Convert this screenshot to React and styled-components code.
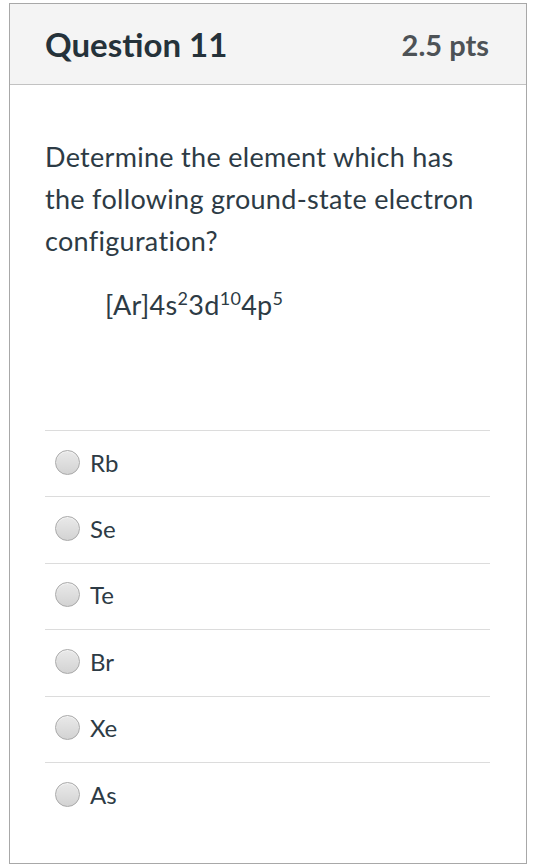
import styled, { createGlobalStyle } from "styled-components";

const GlobalStyle = createGlobalStyle`
  body {
    margin: 0;
    background: #ffffff;
    font-family: Lato, "Liberation Sans", sans-serif;
  }
`;

const Card = styled.div`
  width: 518px;
  margin: 3px 0 0 9px;
  border: 1.5px solid #a8a8a8;
  box-sizing: border-box;
  background: #ffffff;
`;

const Header = styled.div`
  height: 81px;
  background: #f4f4f4;
  border-bottom: 1px solid #c2c2c2;
  box-sizing: border-box;
  display: flex;
  align-items: center;
  justify-content: space-between;
  padding: 0 37px 0 35px;
`;

const Title = styled.div`
  font-weight: 700;
  font-size: 33px;
  color: #25323a;
`;

const Points = styled.div`
  font-weight: 700;
  font-size: 29px;
  color: #4d5256;
`;

const Body = styled.div`
  padding: 51px 35px 35px 35px;
  color: #2d3b45;
`;

const Text = styled.p`
  margin: 0;
  font-size: 27px;
  letter-spacing: 0.3px;
  line-height: 42px;
  padding-left: ${(p) => p.indent || 0}px;
`;

const Sup = styled.sup`
  font-size: 18px;
  line-height: 0;
  vertical-align: 10px;
`;

const Answers = styled.div`
  margin-top: 104px;
`;

const Row = styled.label`
  height: 66.4px;
  box-sizing: border-box;
  border-top: 1px solid #dcdcdc;
  display: flex;
  align-items: center;
  gap: 10px;
  padding: 0 0 3px 10px;
  margin-right: 1px;
  font-size: 24px;
  color: #2d3b45;
`;

const Radio = styled.span`
  width: 25px;
  height: 25px;
  border-radius: 50%;
  box-sizing: border-box;
  border: 1px solid #a9a9a9;
  background: linear-gradient(#e9e9e9, #d3d3d3);
  box-shadow: inset 0 1px 1px rgba(255, 255, 255, 0.6);
  flex-shrink: 0;
`;

const options = ["Rb", "Se", "Te", "Br", "Xe", "As"];

export default function App() {
  return (
    <>
      <GlobalStyle />
      <Card>
        <Header>
          <Title>Question 11</Title>
          <Points>2.5 pts</Points>
        </Header>
        <Body>
          <Text>
            Determine the element which has the following ground-state
            electron configuration?
          </Text>
          <Text indent={60} style={{ marginTop: 22 }}>
            [Ar]4s<Sup>2</Sup>3d<Sup>10</Sup>4p<Sup>5</Sup>
          </Text>
          <Answers>
            {options.map((o) => (
              <Row key={o}>
                <Radio />
                {o}
              </Row>
            ))}
          </Answers>
        </Body>
      </Card>
    </>
  );
}
